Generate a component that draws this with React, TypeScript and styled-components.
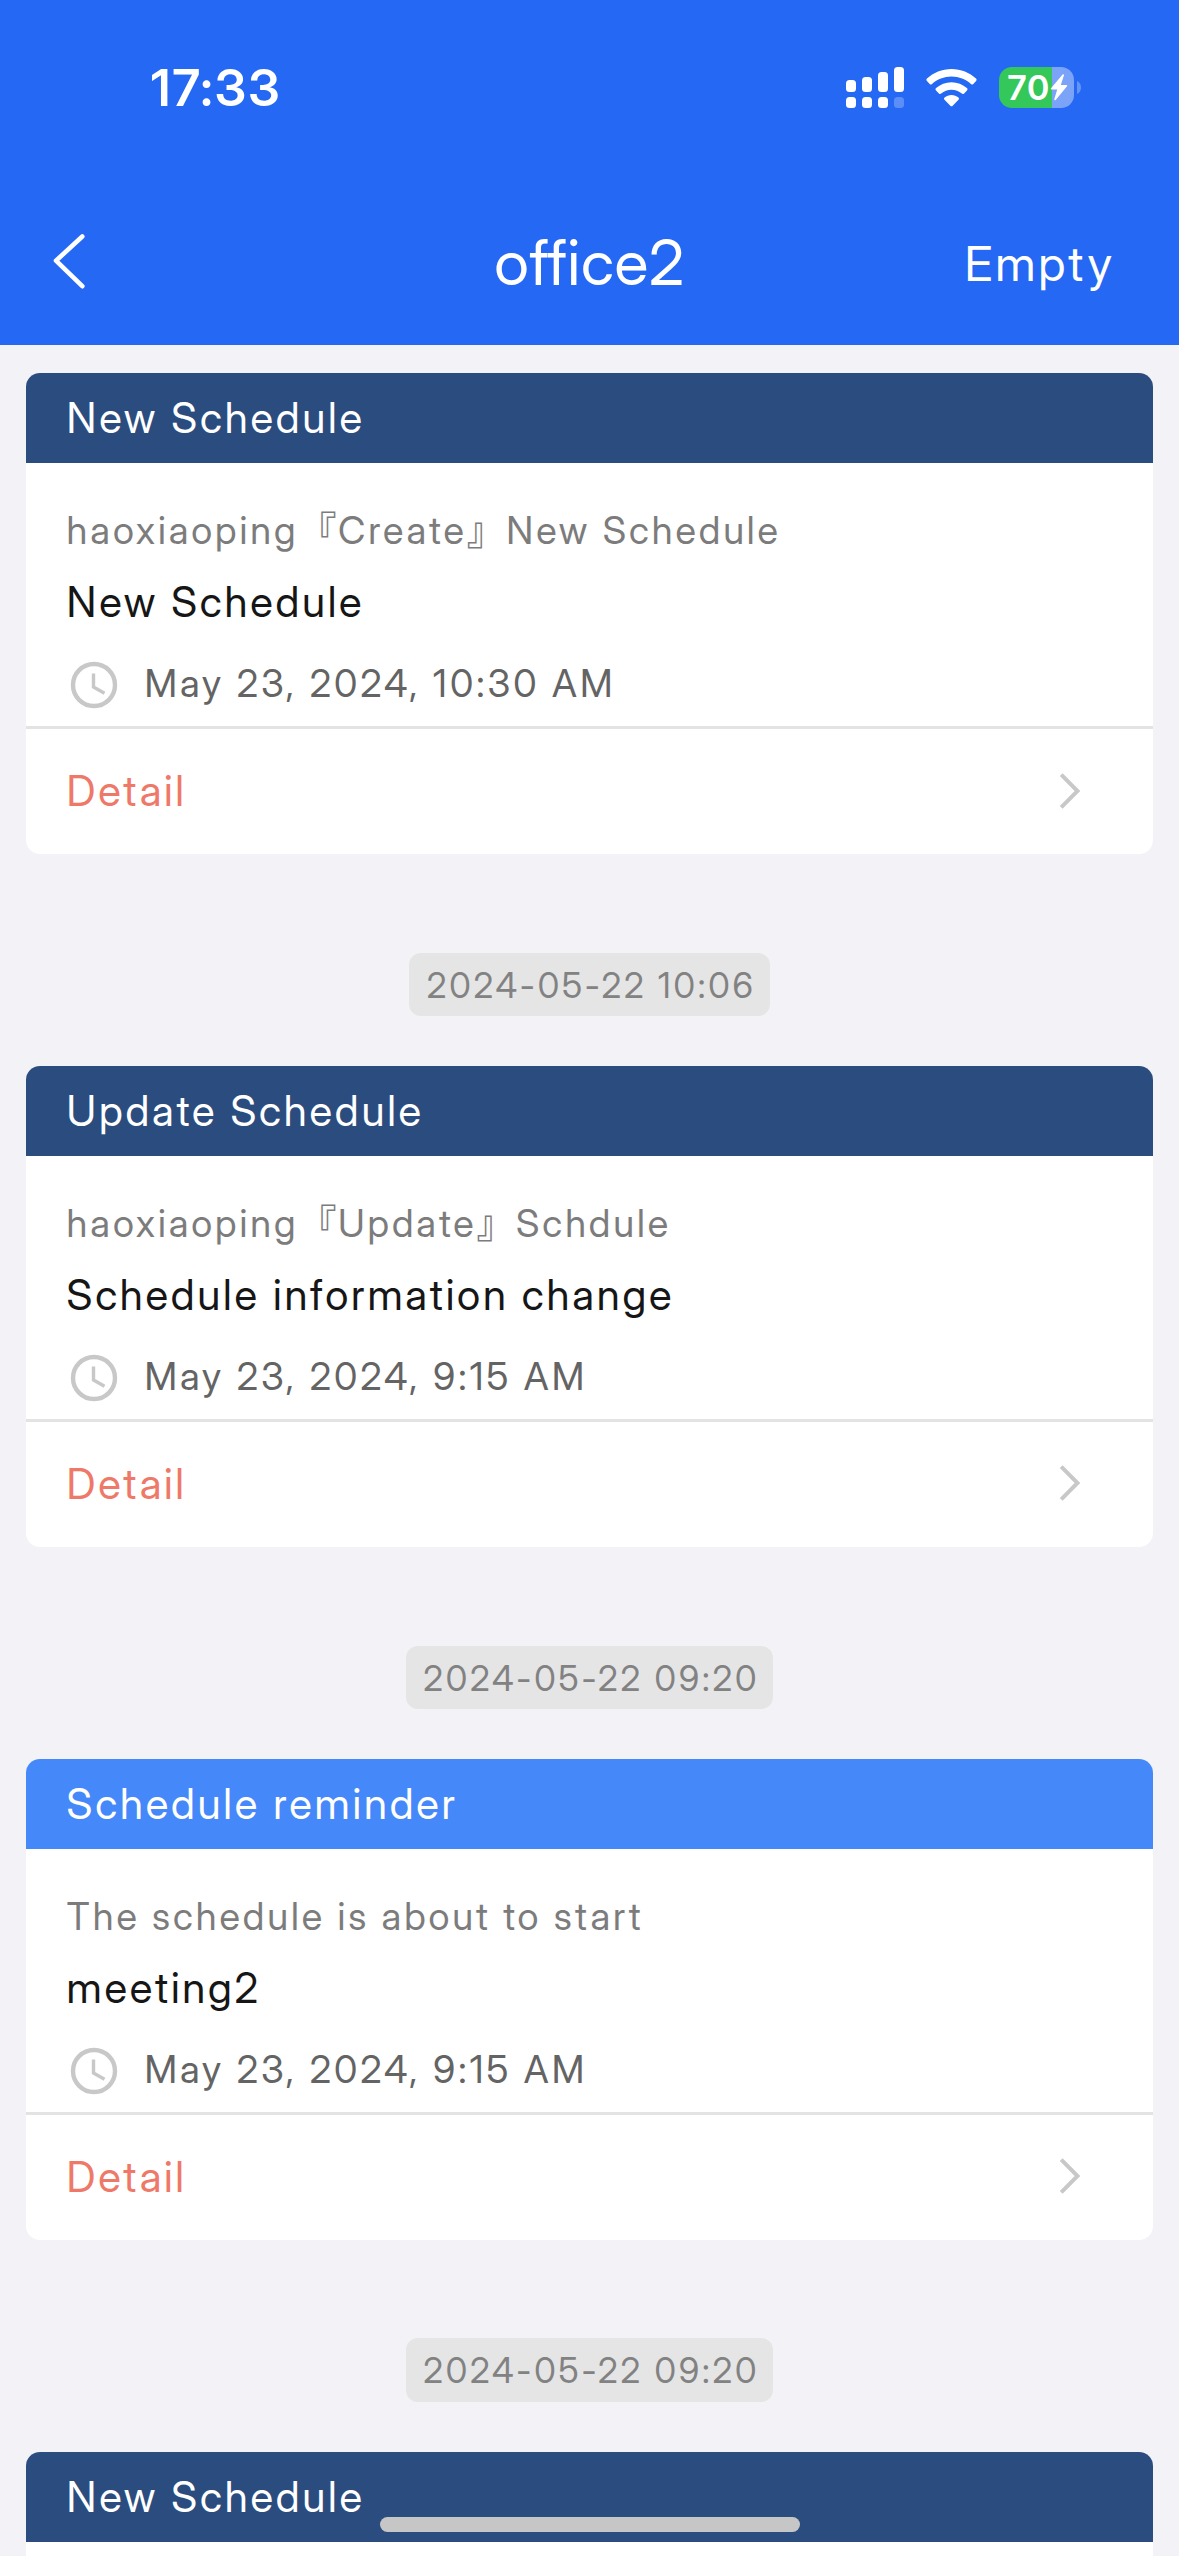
import React from "react";
import styled, { createGlobalStyle } from "styled-components";

const GlobalStyle = createGlobalStyle`
  *, *::before, *::after { box-sizing: border-box; }
  html, body { margin: 0; padding: 0; background: #f2f2f7; }
  body {
    width: 1179px;
    height: 2556px;
    overflow: hidden;
    font-family: "Inter Display", Inter, "Noto Sans CJK SC", sans-serif;
  }
`;

const Screen = styled.div`
  position: relative;
  display: flex;
  flex-direction: column;
  width: 1179px;
  height: 2556px;
  overflow: hidden;
  background: #f2f2f7;
`;

const Header = styled.header`
  flex: none;
  display: flex;
  flex-direction: column;
  height: 345px;
  background: #2568f4;
  color: #fff;
`;

const StatusBar = styled.div`
  display: flex;
  align-items: center;
  justify-content: space-between;
  height: 175px;
  padding: 0 98px 0 151px;
`;

const Clock = styled.span`
  font-size: 51px;
  font-weight: 600;
  line-height: 60px;
  letter-spacing: 2.2px;
`;

const StatusIcons = styled.div`
  display: flex;
  align-items: center;
  gap: 22px;
`;

const Battery = styled.div`
  display: flex;
  align-items: center;
  gap: 3px;
`;

const BatteryBody = styled.div`
  display: flex;
  align-items: center;
  width: 75px;
  height: 41px;
  padding-left: 8px;
  border-radius: 13px;
  background: linear-gradient(to right, #34c759 53px, #7ba3f8 53px);
`;

const BatteryLevel = styled.span`
  width: 43px;
  font-family: Inter, sans-serif;
  font-size: 34.5px;
  font-weight: 600;
  line-height: 41px;
  letter-spacing: 0.5px;
`;

const NavBar = styled.nav`
  display: grid;
  grid-template-columns: 1fr auto 1fr;
  align-items: center;
  height: 170px;
  padding: 3px 64px 0 50px;
`;

const IconButton = styled.button`
  display: flex;
  justify-self: start;
  padding: 0;
  border: 0;
  background: none;
  color: inherit;
`;

const Title = styled.h1`
  margin: 0 0 0 14px;
  font-size: 63px;
  font-weight: 400;
  line-height: 76px;
  letter-spacing: 0.58px;
`;

const TextButton = styled.button`
  justify-self: end;
  padding: 4px 0 0;
  border: 0;
  background: none;
  color: inherit;
  font: 400 48px/58px "Inter Display", Inter, sans-serif;
  letter-spacing: 2.86px;
`;

const Feed = styled.main`
  flex: none;
  display: flex;
  flex-direction: column;
  padding: 28px 26px 0;
`;

const Card = styled.article`
  flex: none;
  height: 481px;
  border-radius: 14px;
  overflow: hidden;
  background: #fff;
`;

const CardHeader = styled.header<{ $tone: string }>`
  height: 90px;
  padding-left: 40.6px;
  background: ${(p) => p.$tone};
  color: #fff;
  font-size: 42px;
  line-height: 90px;
  letter-spacing: 2.78px;
`;

const CardBody = styled.div`
  display: flex;
  flex-direction: column;
  height: 263px;
  padding: 39px 40.6px 0;
  line-height: 56px;
  white-space: nowrap;
`;

const Summary = styled.div`
  height: 56px;
  color: #7c7c7c;
  font-size: 38px;
  letter-spacing: 2.92px;
`;

const Bracket = styled.span`
  font-family: "Noto Sans CJK SC", sans-serif;
  font-size: 38px;
  font-weight: 500;
  line-height: 0;
  letter-spacing: 1.5px;
`;

const Subject = styled.div`
  margin-top: 16px;
  color: #161616;
  font-size: 42px;
  letter-spacing: 2.75px;
`;

const When = styled.div`
  display: flex;
  align-items: center;
  gap: 26px;
  margin-top: 25px;
  padding-left: 3.800px;
  color: #646464;
  font-size: 38px;
  letter-spacing: 3px;

  svg { margin-top: 4px; }
`;

const DetailRow = styled.a`
  display: flex;
  align-items: center;
  justify-content: space-between;
  height: 128px;
  padding: 0 72px 2px 40.6px;
  border-top: 3px solid #e3e3e4;
  color: #ee7969;
  font-size: 42px;
  letter-spacing: 2.64px;
`;

const Timestamp = styled.time`
  align-self: center;
  flex: none;
  height: 63.3px;
  margin: 98.8px 0 49.75px;
  padding: 1px 14px 0 17.500px;
  border-radius: 12px;
  background: #e5e5e6;
  color: #828282;
  font-size: 35px;
  line-height: 63px;
  letter-spacing: 2.8px;
`;

const HomeIndicator = styled.div`
  position: absolute;
  left: 380px;
  bottom: 24px;
  width: 420px;
  height: 15px;
  border-radius: 8px;
  background: #c6c6c6;
`;

const SignalIcon = () => (
  <svg width="58" height="42" viewBox="0 0 58 42" fill="#fff">
    <rect x="0" y="13" width="10" height="12" rx="3.5" />
    <rect x="16" y="10" width="10" height="15" rx="3.5" />
    <rect x="32" y="5" width="10" height="20" rx="3.5" />
    <rect x="48" y="0" width="10" height="25" rx="3.5" />
    <rect x="0" y="30" width="10" height="11" rx="3.5" />
    <rect x="16" y="30" width="10" height="11" rx="3.5" />
    <rect x="32" y="30" width="10" height="11" rx="3.5" />
    <rect x="48" y="30" width="10" height="11" rx="3.5" opacity="0.25" />
  </svg>
);

const WifiIcon = () => (
  <svg width="51" height="38" viewBox="0 0 51 38" fill="#fff">
    <path d="M25.5 0C35 0 43.600 3.600 50 9.600c.8.700.8 1.700.1 2.400l-2.800 2.900c-.7.700-1.600.7-2.300 0C39.800 10.200 33 7.400 25.500 7.400S11.200 10.200 6 14.900c-.7.700-1.600.7-2.300 0L.9 12C.2 11.300.2 10.300 1 9.600 7.400 3.600 16 0 25.500 0z" />
    <path d="M25.500 13.200c5.900 0 11.300 2.200 15.400 5.900.8.700.8 1.700.1 2.400l-2.900 2.900c-.7.700-1.600.7-2.300.1-2.800-2.400-6.400-3.800-10.300-3.800s-7.500 1.400-10.300 3.800c-.7.600-1.600.6-2.300-.1L10 21.500c-.7-.7-.7-1.700.1-2.400 4.100-3.700 9.500-5.900 15.400-5.900z" />
    <path d="M25.500 25.900c2.600 0 5 .9 6.900 2.500.8.700.8 1.700.1 2.400l-5.800 5.900c-.7.700-1.700.7-2.400 0l-5.800-5.900c-.7-.7-.7-1.700.1-2.400 1.900-1.600 4.300-2.500 6.900-2.500z" />
  </svg>
);

const BoltIcon = () => (
  <svg width="18" height="27" viewBox="0 0 18 27" fill="#fff">
    <path d="M12.600 .6 1 14.200c-.5.600-.2 1.300.6 1.300h5.600L4.300 25.200c-.3 1.100.7 1.600 1.400.7L17 12.300c.5-.6.200-1.300-.6-1.300h-5.600L13.900 1.400c.4-1.200-.6-1.600-1.300-.8z" />
  </svg>
);

const BatteryCap = () => (
  <svg width="4" height="13" viewBox="0 0 4 13" fill="#6693f7">
    <path d="M0 0c2.400 .8 4 3.400 4 6.500S2.400 12.200 0 13z" />
  </svg>
);

const BackIcon = () => (
  <svg width="38" height="56" viewBox="0 0 38 56" fill="none" stroke="#fff" strokeWidth="4.600" strokeLinecap="round" strokeLinejoin="round">
    <path d="M32.300 2.500 6 26.700 32.300 52.200" />
  </svg>
);

const ClockIcon = () => (
  <svg width="48" height="48" viewBox="0 0 48 48" fill="none" stroke="#c8c8c8">
    <circle cx="24" cy="24" r="21" strokeWidth="4.400" />
    <path d="M23.500 12.500V26l11 6.200" strokeWidth="3.400" />
  </svg>
);

const ChevronIcon = () => (
  <svg width="22" height="36" viewBox="0 0 22 36" fill="none" stroke="#c8c8c8" strokeWidth="4">
    <path d="M2.200 1.600 18.500 18 2.200 34.400" />
  </svg>
);

type Notice = {
  tone: string;
  heading: string;
  summary: React.ReactNode;
  subject: string;
  when: string;
  sentAt?: string;
};

const NAVY = "#2b4c7e";
const SKY = "#4588f9";

const action = (who: string, verb: string, target: string) => (
  <>
    {who}
    <Bracket>『</Bracket>
    {verb}
    <Bracket>』</Bracket>
    {target}
  </>
);

const notices: Notice[] = [
  { tone: NAVY, heading: "New Schedule", summary: action("haoxiaoping", "Create", "New Schedule"), subject: "New Schedule", when: "May 23, 2024, 10:30 AM" },
  { tone: NAVY, heading: "Update Schedule", summary: action("haoxiaoping", "Update", "Schdule"), subject: "Schedule information change", when: "May 23, 2024, 9:15 AM", sentAt: "2024-05-22 10:06" },
  { tone: SKY, heading: "Schedule reminder", summary: "The schedule is about to start", subject: "meeting2", when: "May 23, 2024, 9:15 AM", sentAt: "2024-05-22 09:20" },
];

const NoticeCard = ({ notice }: { notice: Notice }) => (
  <>
    {notice.sentAt && <Timestamp>{notice.sentAt}</Timestamp>}
    <Card>
      <CardHeader $tone={notice.tone}>{notice.heading}</CardHeader>
      <CardBody>
        <Summary>{notice.summary}</Summary>
        <Subject>{notice.subject}</Subject>
        <When>
          <ClockIcon />
          {notice.when}
        </When>
      </CardBody>
      <DetailRow>
        Detail
        <ChevronIcon />
      </DetailRow>
    </Card>
  </>
);

export default function App() {
  return (
    <Screen>
      <GlobalStyle />
      <Header>
        <StatusBar>
          <Clock>17:33</Clock>
          <StatusIcons>
            <SignalIcon />
            <WifiIcon />
            <Battery>
              <BatteryBody>
                <BatteryLevel>70</BatteryLevel>
                <BoltIcon />
              </BatteryBody>
              <BatteryCap />
            </Battery>
          </StatusIcons>
        </StatusBar>
        <NavBar>
          <IconButton aria-label="Back">
            <BackIcon />
          </IconButton>
          <Title>office2</Title>
          <TextButton>Empty</TextButton>
        </NavBar>
      </Header>
      <Feed>
        {notices.map((notice) => (
          <NoticeCard key={notice.heading} notice={notice} />
        ))}
        <Timestamp>2024-05-22 09:20</Timestamp>
        <Card>
          <CardHeader $tone={NAVY}>New Schedule</CardHeader>
        </Card>
      </Feed>
      <HomeIndicator />
    </Screen>
  );
}
